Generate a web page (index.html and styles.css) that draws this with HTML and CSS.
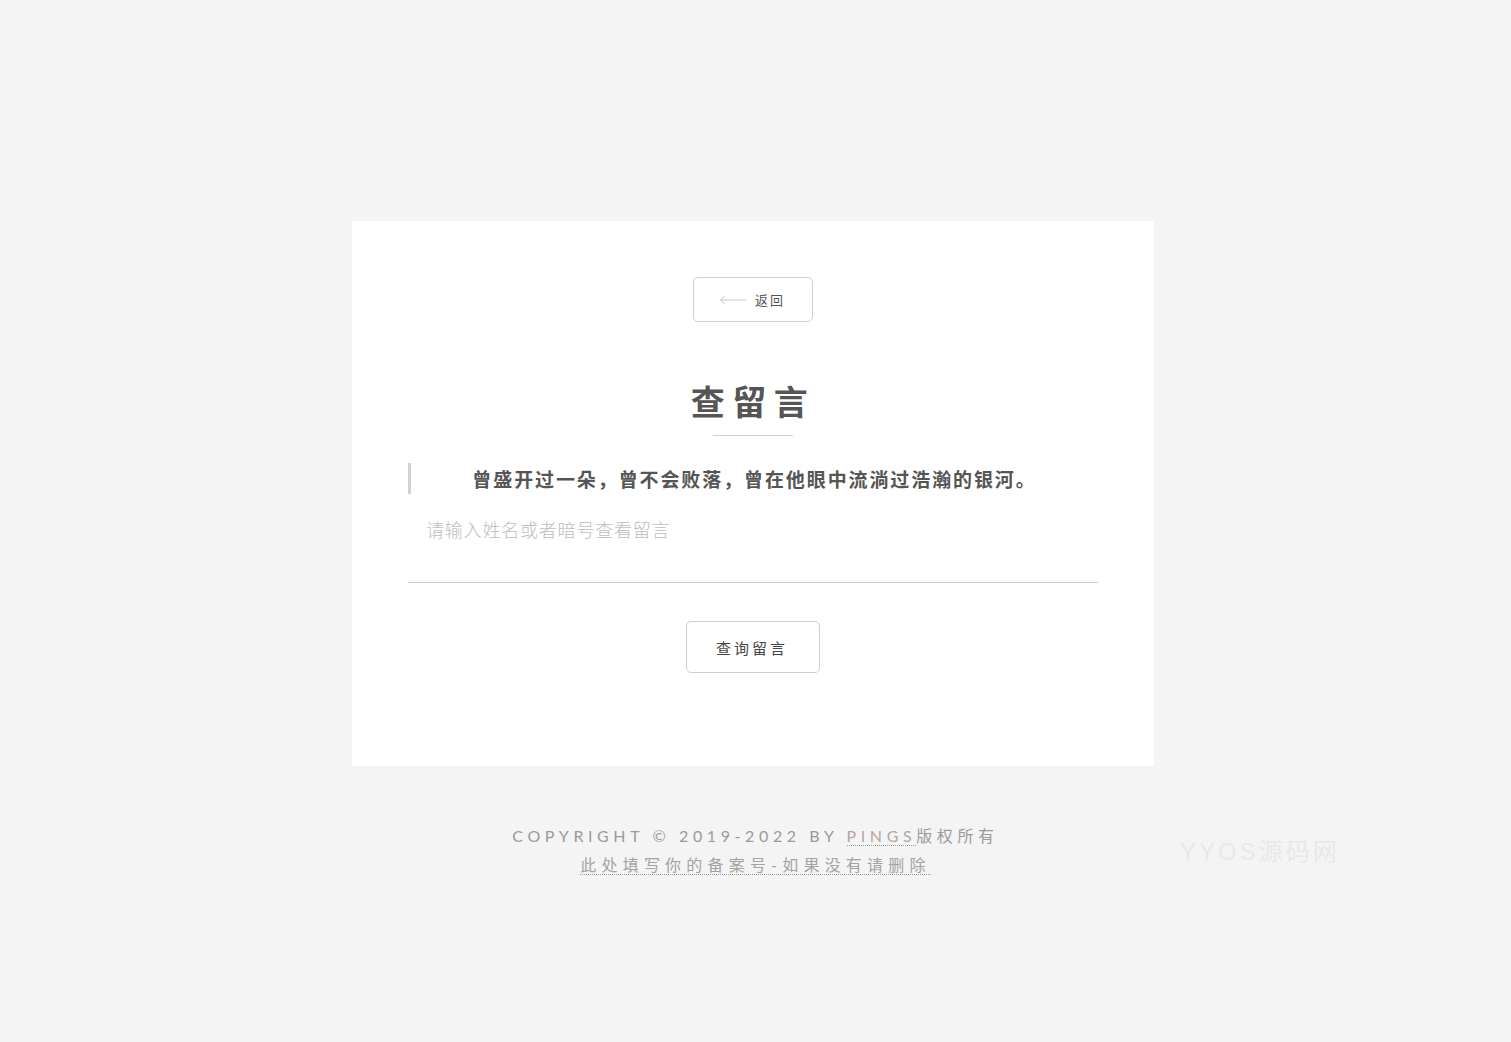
FILE: index.html
```html
<!DOCTYPE html>
<html lang="zh-CN">
<head>
<meta charset="utf-8">
<title>查留言</title>
<link rel="stylesheet" href="styles.css">
</head>
<body>
<main class="page">
  <section class="card">
    <a class="back-btn" href="#">
      <svg class="back-arrow" width="28" height="10" viewBox="0 0 28 10"><path d="M27 5H1.5M5.5 1L1.5 5L5.5 9" fill="none" stroke="#c8c8c8" stroke-width="1"/></svg>
      <span class="back-text">返回</span>
    </a>
    <h1 class="title">查留言</h1>
    <div class="title-line"></div>
    <blockquote class="quote">曾盛开过一朵，曾不会败落，曾在他眼中流淌过浩瀚的银河。</blockquote>
    <input class="query-input" type="text" placeholder="请输入姓名或者暗号查看留言">
    <div class="submit-row">
      <button class="submit-btn" type="button">查询留言</button>
    </div>
  </section>
  <footer class="footer">
    <p class="copy">COPYRIGHT © 2019-2022 BY <a class="dotlink" href="#">PINGS</a>版权所有</p>
    <p class="icp"><a class="dotlink" href="#">此处填写你的备案号-如果没有请删除</a></p>
    <span class="watermark">YYOS源码网</span>
  </footer>
</main>
</body>
</html>
```

FILE: styles.css
```css
* { box-sizing: border-box; }
html, body { margin: 0; padding: 0; }
body {
  background: #f4f4f4;
  font-family: "Noto Sans CJK SC", "Noto Sans", sans-serif;
  color: #555;
}
.page {
  position: relative;
  padding-top: 221px;
  min-height: 1042px;
}
.card {
  width: 802px;
  height: 545px;
  margin: 0 0 0 352px;
  background: #fff;
  padding: 56px 56px 0;
  display: flex;
  flex-direction: column;
  align-items: center;
}
.back-btn {
  width: 120px;
  height: 45px;
  border: 1px solid #cfcfcf;
  border-radius: 5px;
  display: flex;
  align-items: center;
  justify-content: center;
  gap: 8px;
  text-decoration: none;
  padding-right: 2px;
}
.back-arrow { display: block; }
.back-text {
  font-size: 13px;
  letter-spacing: 2px;
  color: #555;
  line-height: 1;
}
.title {
  margin: 57px 0 0;
  font-size: 34px;
  font-weight: 700;
  letter-spacing: 7.5px;
  padding-left: 0;
  line-height: 44px;
  color: #555;
}
.title-line {
  width: 80px;
  height: 1px;
  background: #d0d0d0;
  margin-top: 12px;
}
.quote {
  align-self: stretch;
  margin: 27px 0 0;
  height: 31px;
  border-left: 3px solid #d2d2d2;
  padding: 0;
  text-align: center;
  font-size: 19px;
  font-weight: 700;
  letter-spacing: 1.9px;
  line-height: 31px;
  color: #555;
}
.query-input {
  align-self: stretch;
  display: block;
  margin-top: 18px;
  height: 71px;
  border: 0;
  border-bottom: 1px solid #cccccc;
  outline: none;
  background: transparent;
  padding: 0 18px 36px;
  font-family: "Noto Sans CJK SC", sans-serif;
  font-size: 18px;
  font-weight: 300;
  letter-spacing: 0.8px;
  color: #555;
}
.query-input::placeholder { color: #c2bcb6; }
.submit-row { margin-top: 38px; }
.submit-btn {
  width: 134px;
  height: 52px;
  border: 1px solid #cfcfcf;
  border-radius: 5px;
  background: #fff;
  font-family: "Noto Sans CJK SC", sans-serif;
  font-size: 15px;
  letter-spacing: 3px;
  padding-left: 4px;
  color: #444;
  cursor: pointer;
}
.footer {
  margin-top: 55px;
  text-align: center;
  font-family: Lato, "Noto Sans CJK SC", sans-serif;
  color: #9a9a9a;
  font-size: 16px;
  padding-left: 0;
}
.footer p { margin: 0; line-height: 29px; }
.copy { letter-spacing: 4.6px; }
.icp { letter-spacing: 5.2px; }
.dotlink {
  color: #a3a3a3;
  text-decoration: none;
  border-bottom: 1px dotted #999;
}
.copy .dotlink { color: #b4a7a0; }
.watermark {
  position: absolute;
  left: 1180px;
  top: 832px;
  font-family: "Liberation Sans", "Noto Sans CJK SC", sans-serif;
  font-size: 24px;
  letter-spacing: 3px;
  color: #e8e8e8;
}
```
